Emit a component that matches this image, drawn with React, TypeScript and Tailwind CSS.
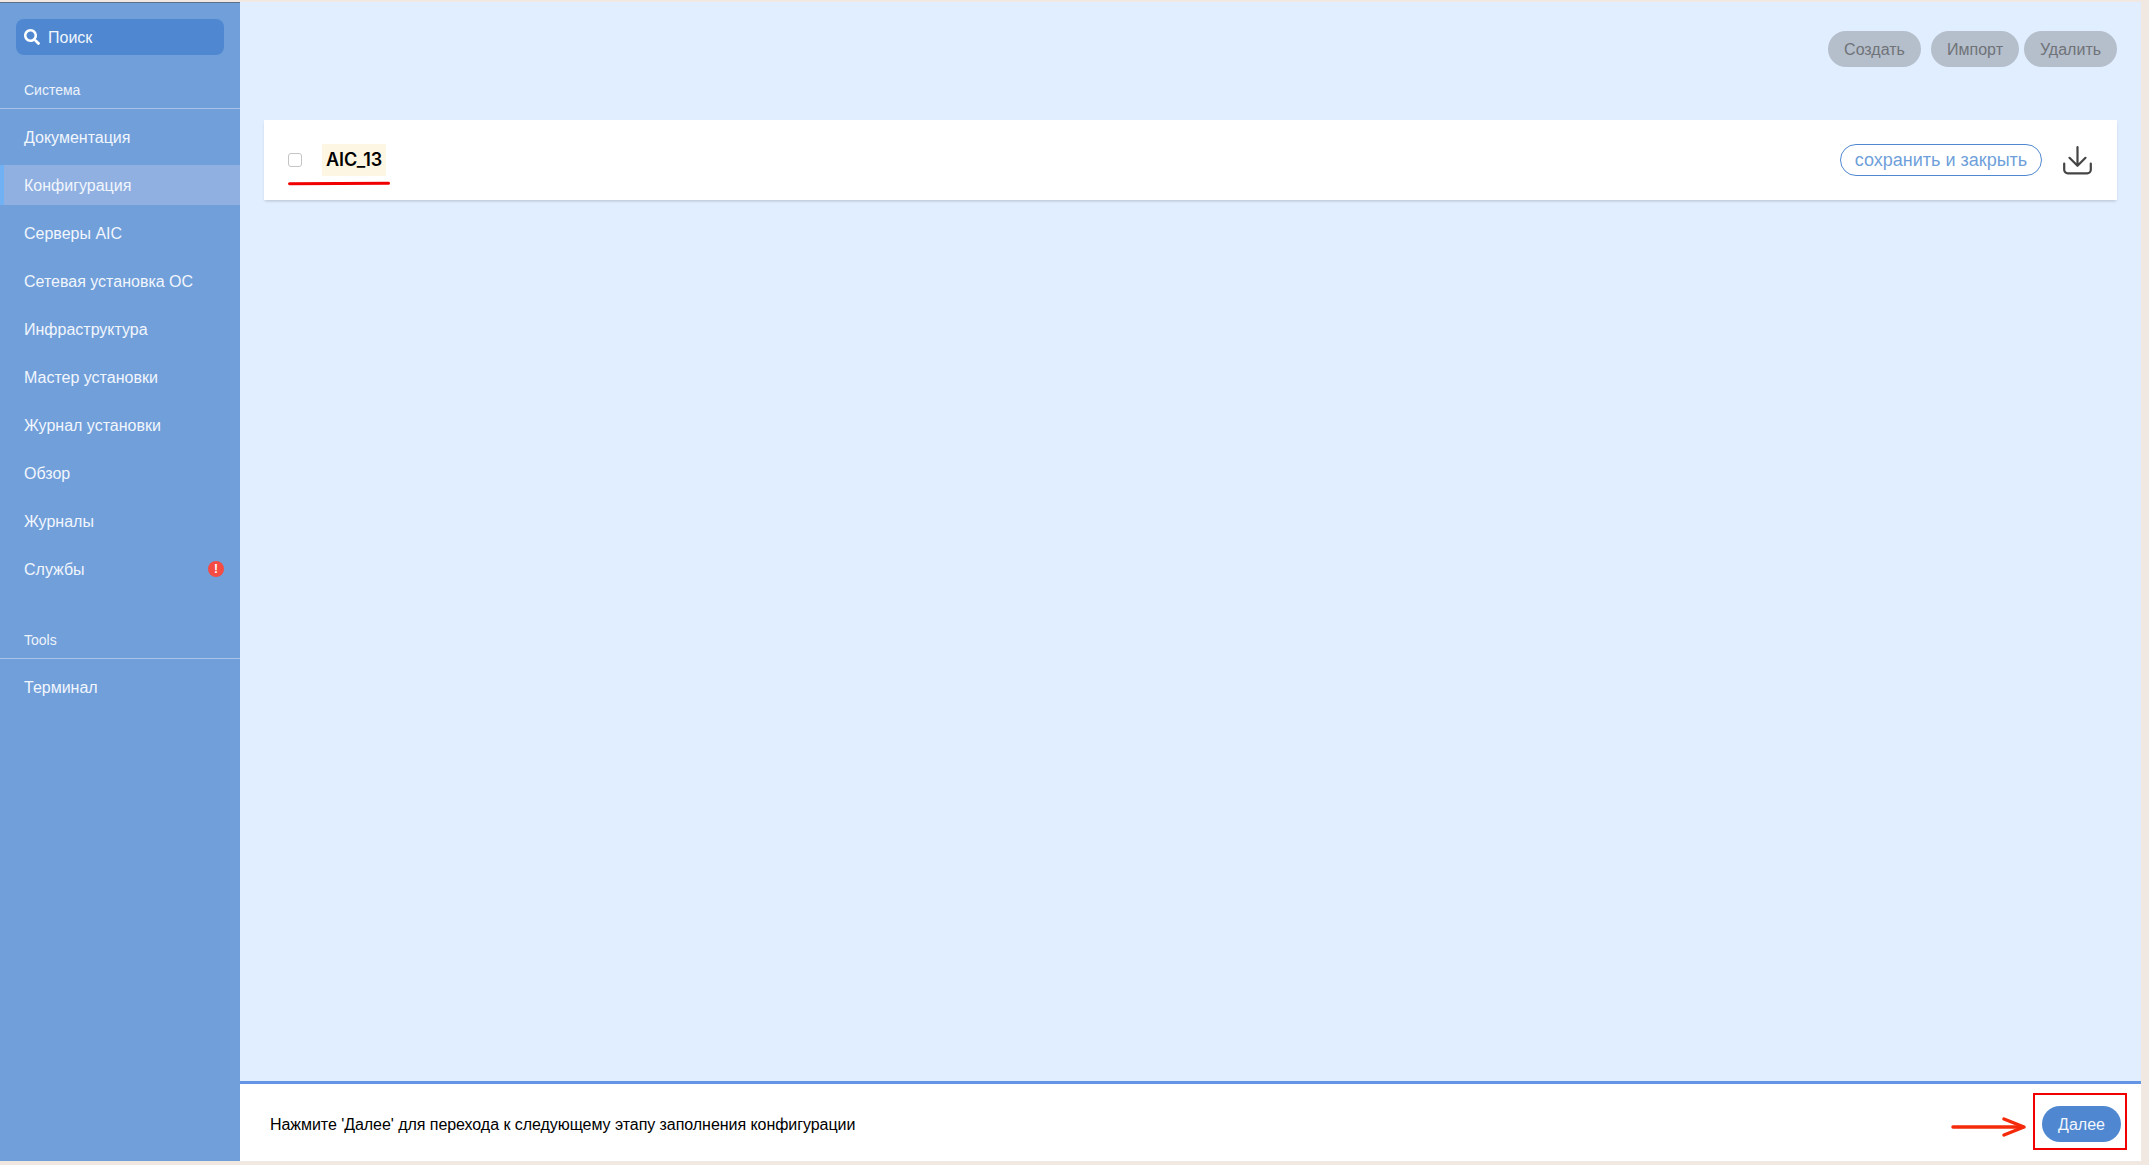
import { FaSearch } from 'react-icons/fa';

const items = [
  'Документация',
  'Конфигурация',
  'Серверы AIC',
  'Сетевая установка ОС',
  'Инфраструктура',
  'Мастер установки',
  'Журнал установки',
  'Обзор',
  'Журналы',
  'Службы',
];

const NavItem = ({ label }: { label: string }) => (
  <div className="h-12 flex items-center">
    <div
      className={`w-full h-10 flex items-center justify-between pt-[2px] pr-4 text-base text-[#f2f6fd] ${
        label === 'Конфигурация' ? 'bg-[#8fb0e1] border-l-4 border-[#6fb1f3] pl-5' : 'pl-6'
      }`}
    >
      {label}
      {label === 'Службы' && (
        <span className="w-4 h-4 -mt-[2px] rounded-full bg-[#f44c42] flex items-center justify-center text-white text-[12px] font-bold leading-none">
          !
        </span>
      )}
    </div>
  </div>
);

const SectionTitle = ({ children }: { children: string }) => (
  <div className="h-[30px] pl-6 border-b border-[#a9c3ea] text-sm leading-[22px] text-[#eef3fb]">{children}</div>
);

const GreyButton = ({ children, w }: { children: string; w: string }) => (
  <button className={`h-9 pt-[2px] ${w} rounded-full bg-[#b5becb] text-base text-[#6f7378]`}>{children}</button>
);

export default function App() {
  return (
    <div className="w-[2149px] h-[1165px] bg-[#f1e9e1] pt-[2px] pb-1 pr-2 flex font-['Liberation_Sans',sans-serif] overflow-hidden">
      <aside className="w-60 shrink-0 bg-[#709fda] border-t border-[#5a6f8c] pt-4">
        <div className="mx-4 h-9 rounded-lg bg-[#4f88d1] flex items-center gap-2 px-2 text-base text-[#f2f6fd]">
          <FaSearch size={16} className="text-white" />
          <span className="pt-[2px]">Поиск</span>
        </div>
        <div className="mt-6">
          <SectionTitle>Система</SectionTitle>
        </div>
        <div className="pt-1">
          {items.map((label) => (
            <NavItem key={label} label={label} />
          ))}
        </div>
        <div className="mt-9">
          <SectionTitle>Tools</SectionTitle>
        </div>
        <div className="pt-1">
          <NavItem label="Терминал" />
        </div>
      </aside>

      <main className="flex-1 flex flex-col min-w-0">
        <div className="flex-1 bg-[#e1eeff] px-6">
          <div className="pt-[29px] h-[118px] flex justify-end items-start">
            <GreyButton w="w-[93px]">Создать</GreyButton>
            <div className="w-[10px]" />
            <GreyButton w="w-[88px]">Импорт</GreyButton>
            <div className="w-[5px]" />
            <GreyButton w="w-[93px]">Удалить</GreyButton>
          </div>
          <div className="relative h-[80px] bg-white shadow-[0_2px_3px_-1px_rgba(0,0,0,0.2)] flex items-center pl-6 pr-[25px]">
            <span className="w-[14px] h-[14px] rounded-[3px] border border-[#c4c4c4] bg-white" />
            <span className="ml-5 h-8 px-1 flex items-center bg-[#fdf6e3] font-['Inter',sans-serif] font-semibold text-lg text-black">
              AIC_13
            </span>
            <span className="absolute left-6 top-[62px] w-[102px] h-[3px] rounded-full bg-[#f00000] rotate-[-0.4deg]" />
            <button className="ml-auto h-8 w-[202px] rounded-full border border-[#4f88d1] text-[#6f9fda] text-lg leading-none">
              сохранить и закрыть
            </button>
            <svg className="ml-[21px]" width="29" height="29" viewBox="0 0 29 29" fill="none" stroke="#444" strokeWidth="2.2" strokeLinecap="round" strokeLinejoin="round">
              <path d="M1.2 17.5v6.3a3.6 3.6 0 0 0 3.6 3.6h19.4a3.6 3.6 0 0 0 3.6-3.6v-6.3" />
              <path d="M14.5 1.2v18.6M6.5 11.8l8 8 8-8" />
            </svg>
          </div>
        </div>
        <footer className="relative h-[80px] shrink-0 bg-white border-t-[3px] border-[#6495e4] flex items-center justify-between pt-[3px] pl-[30px] pr-5">
          <span className="pt-[2px] text-base text-black tracking-[-0.05px]">
            Нажмите 'Далее' для перехода к следующему этапу заполнения конфигурации
          </span>
          <button className="w-[79px] h-9 pt-[2px] rounded-full bg-[#4f88d1] text-[#f2f6fd] text-base">Далее</button>
          <span className="absolute right-[14px] top-[9px] w-[94px] h-[57px] border-2 border-[#f00000]" />
          <svg className="absolute left-[1711px] top-[31px]" width="76" height="24" viewBox="0 0 76 24" fill="none">
            <path d="M2 12H72" stroke="#f52a0a" strokeWidth="3.5" strokeLinecap="round" />
            <path d="M53 4L73 12L53 20" stroke="#f52a0a" strokeWidth="3.5" strokeLinecap="round" strokeLinejoin="round" />
          </svg>
        </footer>
      </main>
    </div>
  );
}
